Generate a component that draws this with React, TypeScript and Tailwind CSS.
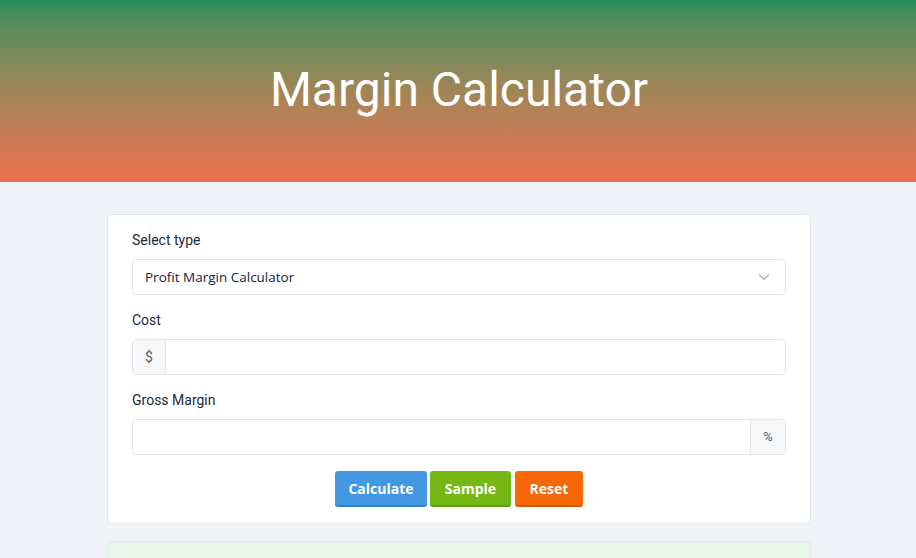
import { ChevronDown } from "lucide-react";

export default function App() {
  return (
    <div className="min-h-[558px] bg-[#f0f3f8] font-['Roboto',sans-serif] text-[#1f2d3d]">
      {/* Header */}
      <header className="h-[182px] flex items-center justify-center bg-gradient-to-b from-[#238e5d] to-[#ef6e50]">
        <h1 className="text-[48px] text-white leading-none -mt-[3px] ml-[2px]">Margin Calculator</h1>
      </header>

      <main className="w-[704px] ml-[107px] pt-[32px]">
        <div className="bg-white border border-[#e3e6ea] rounded-[4px] px-[24px] pt-[15px] pb-[16px]">
          <label className="block text-[14px] text-[#1c2b3a] leading-[20px] mb-[9px]">Select type</label>
          <div className="h-[36px] flex items-center justify-between border border-[#e3e6ea] rounded-[4px] pl-[12px] pr-[12px] font-['Open_Sans',sans-serif] text-[13.5px] text-[#1a2433]">
            <span>Profit Margin Calculator</span>
            <ChevronDown className="w-[18px] h-[18px] text-[#a3a9b2]" strokeWidth={1.5} />
          </div>

          <label className="block text-[14px] text-[#1c2b3a] leading-[20px] mt-[15px] mb-[9px]">Cost</label>
          <div className="h-[36px] flex border border-[#e3e6ea] rounded-[4px] overflow-hidden">
            <span className="w-[33px] flex items-center justify-center bg-[#f7f8fa] border-r border-[#e3e6ea] text-[14px] text-[#555d66]">$</span>
            <input className="flex-1 outline-none px-[12px]" />
          </div>

          <label className="block text-[14px] text-[#1c2b3a] leading-[20px] mt-[15px] mb-[9px]">Gross Margin</label>
          <div className="h-[36px] flex border border-[#e3e6ea] rounded-[4px] overflow-hidden">
            <input className="flex-1 outline-none px-[12px]" />
            <span className="w-[35px] flex items-center justify-center bg-[#f7f8fa] border-l border-[#e3e6ea] text-[13px] text-[#555d66]">%</span>
          </div>

          <div className="flex justify-center gap-[3px] mt-[16px] font-['Open_Sans',sans-serif] text-[14px] font-bold text-white">
            <button className="h-[36px] w-[92px] rounded-[3px] bg-[#4299e1] border-b-2 border-[#3182ce]">Calculate</button>
            <button className="h-[36px] w-[81px] rounded-[3px] bg-[#74b816] border-b-2 border-[#5f9a10]">Sample</button>
            <button className="h-[36px] w-[68px] ml-[1px] rounded-[3px] bg-[#f76707] border-b-2 border-[#d9580a]">Reset</button>
          </div>
        </div>

        <div className="mt-[17px] h-[40px] bg-[#e9f6ec] border border-[#dfeee3] rounded-[4px]"></div>
      </main>
    </div>
  );
}
